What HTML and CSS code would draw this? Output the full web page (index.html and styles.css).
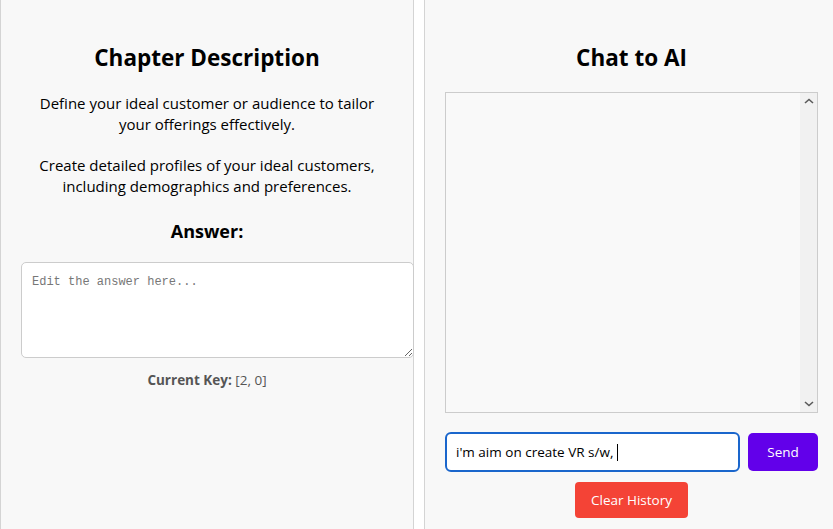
FILE: index.html
```html
<!DOCTYPE html>
<html lang="en">
<head>
<meta charset="utf-8">
<title>Chapter</title>
<link rel="stylesheet" href="styles.css">
</head>
<body>
<div class="layout">
  <section class="panel panel-left">
    <h2 class="title">Chapter Description</h2>
    <p class="desc">Define your ideal customer or audience to tailor your offerings effectively.</p>
    <p class="desc">Create detailed profiles of your ideal customers, including demographics and preferences.</p>
    <h3 class="answer-title">Answer:</h3>
    <textarea class="answer" placeholder="Edit the answer here..."></textarea>
    <p class="key"><strong>Current Key:</strong> [2, 0]</p>
  </section>
  <section class="panel panel-right">
    <h2 class="title">Chat to AI</h2>
    <div class="chat-box">
      <div class="chat-messages"></div>
      <div class="scrollbar">
        <svg class="arrow" width="10" height="6" viewBox="0 0 10 6"><path d="M1 5 L5 1.5 L9 5" fill="none" stroke="#5a5a5a" stroke-width="1.6"/></svg>
        <svg class="arrow" width="10" height="6" viewBox="0 0 10 6"><path d="M1 1 L5 4.5 L9 1" fill="none" stroke="#5a5a5a" stroke-width="1.6"/></svg>
      </div>
    </div>
    <div class="chat-input-row">
      <div class="chat-input">i'm aim on create VR s/w, <span class="caret"></span></div>
      <button class="btn btn-send">Send</button>
    </div>
    <div class="clear-row">
      <button class="btn btn-clear">Clear History</button>
    </div>
  </section>
</div>
</body>
</html>
```
FILE: styles.css
```css
html, body {
  margin: 0;
  padding: 0;
  background: #ffffff;
  overflow: hidden;
}
body {
  font-family: "Open Sans", "Noto Sans", sans-serif;
  color: #000;
}
.layout {
  display: flex;
  gap: 10px;
  width: 840px;
  height: 529px;
}
.panel {
  box-sizing: border-box;
  background: #f8f8f8;
  border-left: 1px solid #d4d4d4;
  border-right: 1px solid #d4d4d4;
  padding: 24px 20px 0;
  height: 529px;
  text-align: center;
}
.panel-left { width: 414px; flex: none; }
.panel-right { width: 415px; flex: none; }
.title {
  margin: 19px 0 0;
  font-size: 22.5px;
  font-weight: 700;
  line-height: 30px;
}
.desc {
  margin: 20px 0 0;
  font-size: 15px;
  line-height: 21px;
  padding: 0 10px;
}
.desc + .desc { margin-top: 20px; }
.answer-title {
  margin: 22px 0 0;
  font-size: 18px;
  font-weight: 700;
  line-height: 24px;
}
.answer {
  display: block;
  margin: 19px 0 0;
  box-sizing: content-box;
  width: 371px;
  height: 74px;
  padding: 10px;
  border: 1px solid #cccccc;
  border-radius: 5px;
  background: #ffffff;
  font-family: "Liberation Mono", monospace;
  font-size: 12px;
  line-height: 18px;
  resize: vertical;
}
.answer::placeholder { color: #777; }
.key {
  margin: 13px 0 0;
  font-size: 13.5px;
  color: #555;
}
.key strong { font-weight: 700; }
.chat-box {
  margin-top: 19px;
  height: 321px;
  box-sizing: border-box;
  border: 1px solid #cccccc;
  background: #f9f9f9;
  display: flex;
}
.chat-messages { flex: 1; }
.scrollbar {
  width: 17px;
  background: #f1f1f1;
  display: flex;
  flex-direction: column;
  justify-content: space-between;
  align-items: center;
  padding: 5px 0 5px;
}
.arrow { display: block; }
.chat-input-row {
  display: flex;
  gap: 8px;
  margin-top: 19px;
  align-items: center;
}
.chat-input {
  flex: 1;
  box-sizing: border-box;
  height: 40px;
  border: 2px solid #1a66cc;
  border-radius: 6px;
  background: #fff;
  padding: 0 9px;
  display: flex;
  align-items: center;
  font-size: 13.5px;
  text-align: left;
  white-space: pre;
}
.caret {
  display: inline-block;
  width: 1px;
  height: 17px;
  background: #000;
}
.btn {
  border: none;
  color: #fff;
  font-family: "Open Sans", "Noto Sans", sans-serif;
  font-size: 13.5px;
  cursor: pointer;
}
.btn-send {
  width: 70px;
  height: 38px;
  background: #6200ea;
  border-radius: 5px;
}
.clear-row {
  margin-top: 10px;
  display: flex;
  justify-content: center;
}
.btn-clear {
  width: 113px;
  height: 36px;
  background: #f44336;
  border-radius: 4px;
}
```
